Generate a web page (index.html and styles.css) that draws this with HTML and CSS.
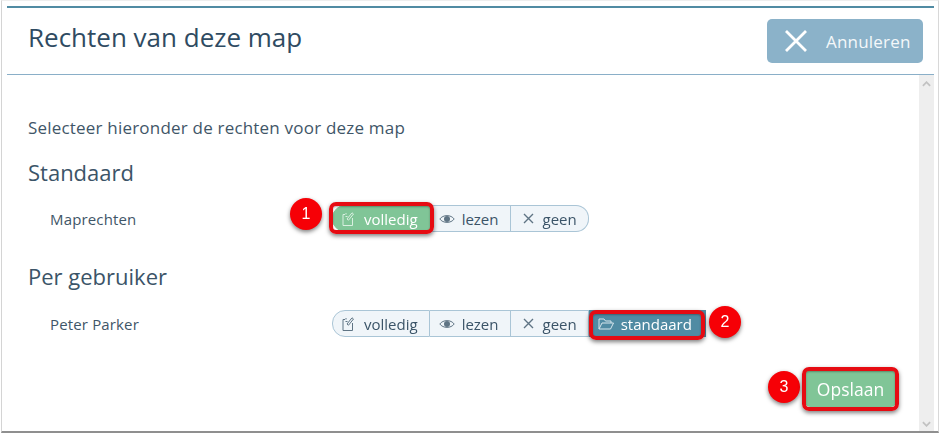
FILE: index.html
```html
<!DOCTYPE html>
<html lang="en">
<head>
  <meta charset="UTF-8">
  <title>Rechten van deze map</title>
  <link rel="stylesheet" href="styles.css">
</head>
<body>
  <div class="window">
    <div class="dialog">
      <div class="dialog-header">
        <h1>Rechten van deze map</h1>
        <button class="cancel-btn">
          <svg class="cancel-icon" viewBox="0 0 22 22"><path d="M1 1 L21 21 M21 1 L1 21"/></svg>
          <span>Annuleren</span>
        </button>
      </div>
      <div class="dialog-body">
        <div class="content">
          <p class="intro">Selecteer hieronder de rechten voor deze map</p>
          <h2 class="first">Standaard</h2>
          <div class="rights-row">
            <div class="rights-label">Maprechten</div>
            <div class="pills">
              <div class="pill pill-full pill-green marked">
                <svg class="icon icon-doc" viewBox="0 0 12 14"><path d="M3 2.5 H1 V13.5 H10.5 V6 M4 2.5 V1 M5 7 L10 .8 L11.5 2 L6.5 8.2 Z M3.5 4.5 H5.5"/></svg>
                volledig
                <span class="badge badge-1">1</span>
              </div>
              <div class="pill pill-read">
                <svg class="icon icon-eye" viewBox="0 0 16 12"><path d="M.8 6 C4 1.5 12 1.5 15.2 6 C12 10.5 4 10.5 .8 6 Z"/><circle class="dot" cx="8" cy="6" r="3"/></svg>
                lezen
              </div>
              <div class="pill pill-none">
                <svg class="icon icon-x" viewBox="0 0 11 11"><path d="M1 1 L10 10 M10 1 L1 10"/></svg>
                geen
              </div>
            </div>
          </div>
          <h2 class="second">Per gebruiker</h2>
          <div class="rights-row">
            <div class="rights-label">Peter Parker</div>
            <div class="pills">
              <div class="pill pill-full">
                <svg class="icon icon-doc" viewBox="0 0 12 14"><path d="M3 2.5 H1 V13.5 H10.5 V6 M4 2.5 V1 M5 7 L10 .8 L11.5 2 L6.5 8.2 Z M3.5 4.5 H5.5"/></svg>
                volledig
              </div>
              <div class="pill pill-read">
                <svg class="icon icon-eye" viewBox="0 0 16 12"><path d="M.8 6 C4 1.5 12 1.5 15.2 6 C12 10.5 4 10.5 .8 6 Z"/><circle class="dot" cx="8" cy="6" r="3"/></svg>
                lezen
              </div>
              <div class="pill pill-none">
                <svg class="icon icon-x" viewBox="0 0 11 11"><path d="M1 1 L10 10 M10 1 L1 10"/></svg>
                geen
              </div>
              <div class="pill pill-default pill-blue marked">
                <svg class="icon icon-folder" viewBox="0 0 16 14"><path d="M1 12 V2 H6 L7.5 4 H13 V6 M1 12 L4 6 H15.5 L12.5 12 Z"/></svg>
                standaard
                <span class="badge badge-2">2</span>
              </div>
            </div>
          </div>
          <div class="actions">
            <button class="save-btn marked">Opslaan<span class="badge badge-3">3</span></button>
          </div>
        </div>
        <div class="scrollbar">
          <svg viewBox="0 0 10 6"><path d="M1 5 L5 1 L9 5"/></svg>
          <svg viewBox="0 0 10 6"><path d="M1 1 L5 5 L9 1"/></svg>
        </div>
      </div>
    </div>
  </div>
</body>
</html>
```

FILE: styles.css
```css
* { box-sizing: border-box; }
html, body { margin: 0; height: 100%; }
body {
  background: #fff;
  font-family: "Open Sans", sans-serif;
  color: #34495e;
  overflow: hidden;
}
.window {
  width: 940px;
  height: 434px;
  padding: 6px 6px 2px 7px;
  background: #fff;
}
.window::before {
  content: "";
  position: fixed;
  left: 1px; top: 0; right: 1px; bottom: 1px;
  border: 1px solid #d4d4d4;
  border-bottom: 2px solid #8f8f8f;
  border-top-color: #eee;
  border-right-color: #d8d8d8;
  pointer-events: none;
}
.dialog {
  height: 100%;
  display: flex;
  flex-direction: column;
  border-top: 2px solid #508ba3;
}
.dialog-header {
  height: 67px;
  flex: none;
  display: flex;
  justify-content: space-between;
  padding: 11px 11px 0 21px;
  border-bottom: 1px solid #8aafc8;
}
h1 {
  margin: 0;
  font-size: 26px;
  font-weight: 400;
  line-height: 36px;
  color: #2f4b62;
}
.cancel-btn {
  width: 156px;
  height: 44px;
  display: flex;
  align-items: center;
  padding: 0 0 0 18px;
  border: 0;
  border-radius: 5px;
  background: #8bb2c9;
  color: #f4f8fa;
  font: 17px "Open Sans", sans-serif;
  letter-spacing: 0.2px;
}
.cancel-icon {
  width: 22px;
  height: 22px;
  margin-right: 19px;
  fill: none;
  stroke: #fff;
  stroke-width: 2.8;
}
.dialog-body {
  flex: 1;
  display: flex;
  min-height: 0;
}
.content {
  flex: 1;
  padding: 42px 21px 0 21px;
}
.intro {
  margin: 0 0 18px;
  font-size: 17px;
  letter-spacing: 0.2px;
  line-height: 22px;
  color: #3f5668;
}
h2 {
  margin: 0 0 19px;
  font-size: 22px;
  font-weight: 400;
  line-height: 30px;
  color: #3b5468;
}
h2.first { margin-bottom: 18px; }
h2.second { margin-top: 29px; }
.rights-row {
  display: flex;
  align-items: center;
  padding-left: 22px;
}
.rights-label {
  width: 282px;
  font-size: 15px;
  letter-spacing: 0.15px;
  color: #3f5668;
}
.pills { display: flex; }
.pill {
  height: 27px;
  display: flex;
  align-items: center;
  gap: 7px;
  position: relative;
  background: #f0f5f9;
  border: 1px solid #aac5d6;
  border-left: 0;
  font-size: 15px;
  color: #3b5468;
}
.pill:first-child {
  border-left: 1px solid #aac5d6;
  border-radius: 13px 0 0 13px;
}
.pill:last-child { border-radius: 0 13px 13px 0; }
.pill-full { padding: 0 11px 0 9px; gap: 10px; }
.pill-read { padding: 0 11px 0 9px; }
.pill-none { padding: 0 11px 0 12px; gap: 9px; }
.pill-default { padding: 0 13px 0 9px; }
.pill-green, .pill-green:first-child {
  background: #80c597;
  border-color: #80c597;
  color: #fff;
}
.pill-blue, .pill-blue:last-child {
  background: #508ba3;
  border-color: #508ba3;
  border-radius: 0;
  color: #fff;
}
.icon {
  flex: none;
  fill: none;
  stroke: #5f7484;
  stroke-width: 1;
}
.icon .dot { fill: #5f7484; stroke: none; }
.icon-doc { width: 12px; height: 14px; }
.icon-eye { width: 16px; height: 12px; }
.icon-x { width: 11px; height: 11px; stroke-width: 1.4; }
.icon-folder { width: 16px; height: 14px; stroke: #d5e5ec; }
.pill-green .icon { stroke: #d9efe0; }
.marked { position: relative; z-index: 1; }
.marked::after {
  content: "";
  position: absolute;
  left: -4px; top: -4px; right: -5px; bottom: -3px;
  border: 4px solid #e60b12;
  border-radius: 7px;
  box-shadow: 0 2px 4px rgba(0, 0, 0, 0.5), inset 0 1px 2px rgba(0, 0, 0, 0.3);
}
.pill-blue::after { left: 0; top: -1px; right: 0; bottom: -4px; }
.save-btn::after { left: -3px; right: -3px; top: -3px; bottom: -4px; }
.badge {
  position: absolute;
  top: 50%;
  width: 32px;
  height: 32px;
  margin-top: -18px;
  border-radius: 50%;
  background: #f60006;
  box-shadow: 0 2px 4px rgba(0, 0, 0, 0.5);
  color: #fff;
  font: 16px/32px "Liberation Sans", sans-serif;
  text-align: center;
}
.badge-1 { left: -43px; margin-top: -21px; }
.badge-2 { right: -36px; }
.badge-3 { left: -37px; }
.actions {
  display: flex;
  justify-content: flex-end;
  margin: 33px 2px 0 0;
}
.save-btn {
  width: 91px;
  height: 37px;
  padding: 0;
  border: 0;
  border-radius: 5px;
  background: #80c597;
  color: #fff;
  font: 17.5px "Open Sans", sans-serif;
}
.scrollbar {
  width: 15px;
  flex: none;
  display: flex;
  flex-direction: column;
  justify-content: space-between;
  align-items: center;
  padding: 6px 0 5px;
  background: #eee;
}
.scrollbar svg {
  width: 9px;
  height: 6px;
  fill: none;
  stroke: #c2c2c2;
  stroke-width: 2;
}
```
